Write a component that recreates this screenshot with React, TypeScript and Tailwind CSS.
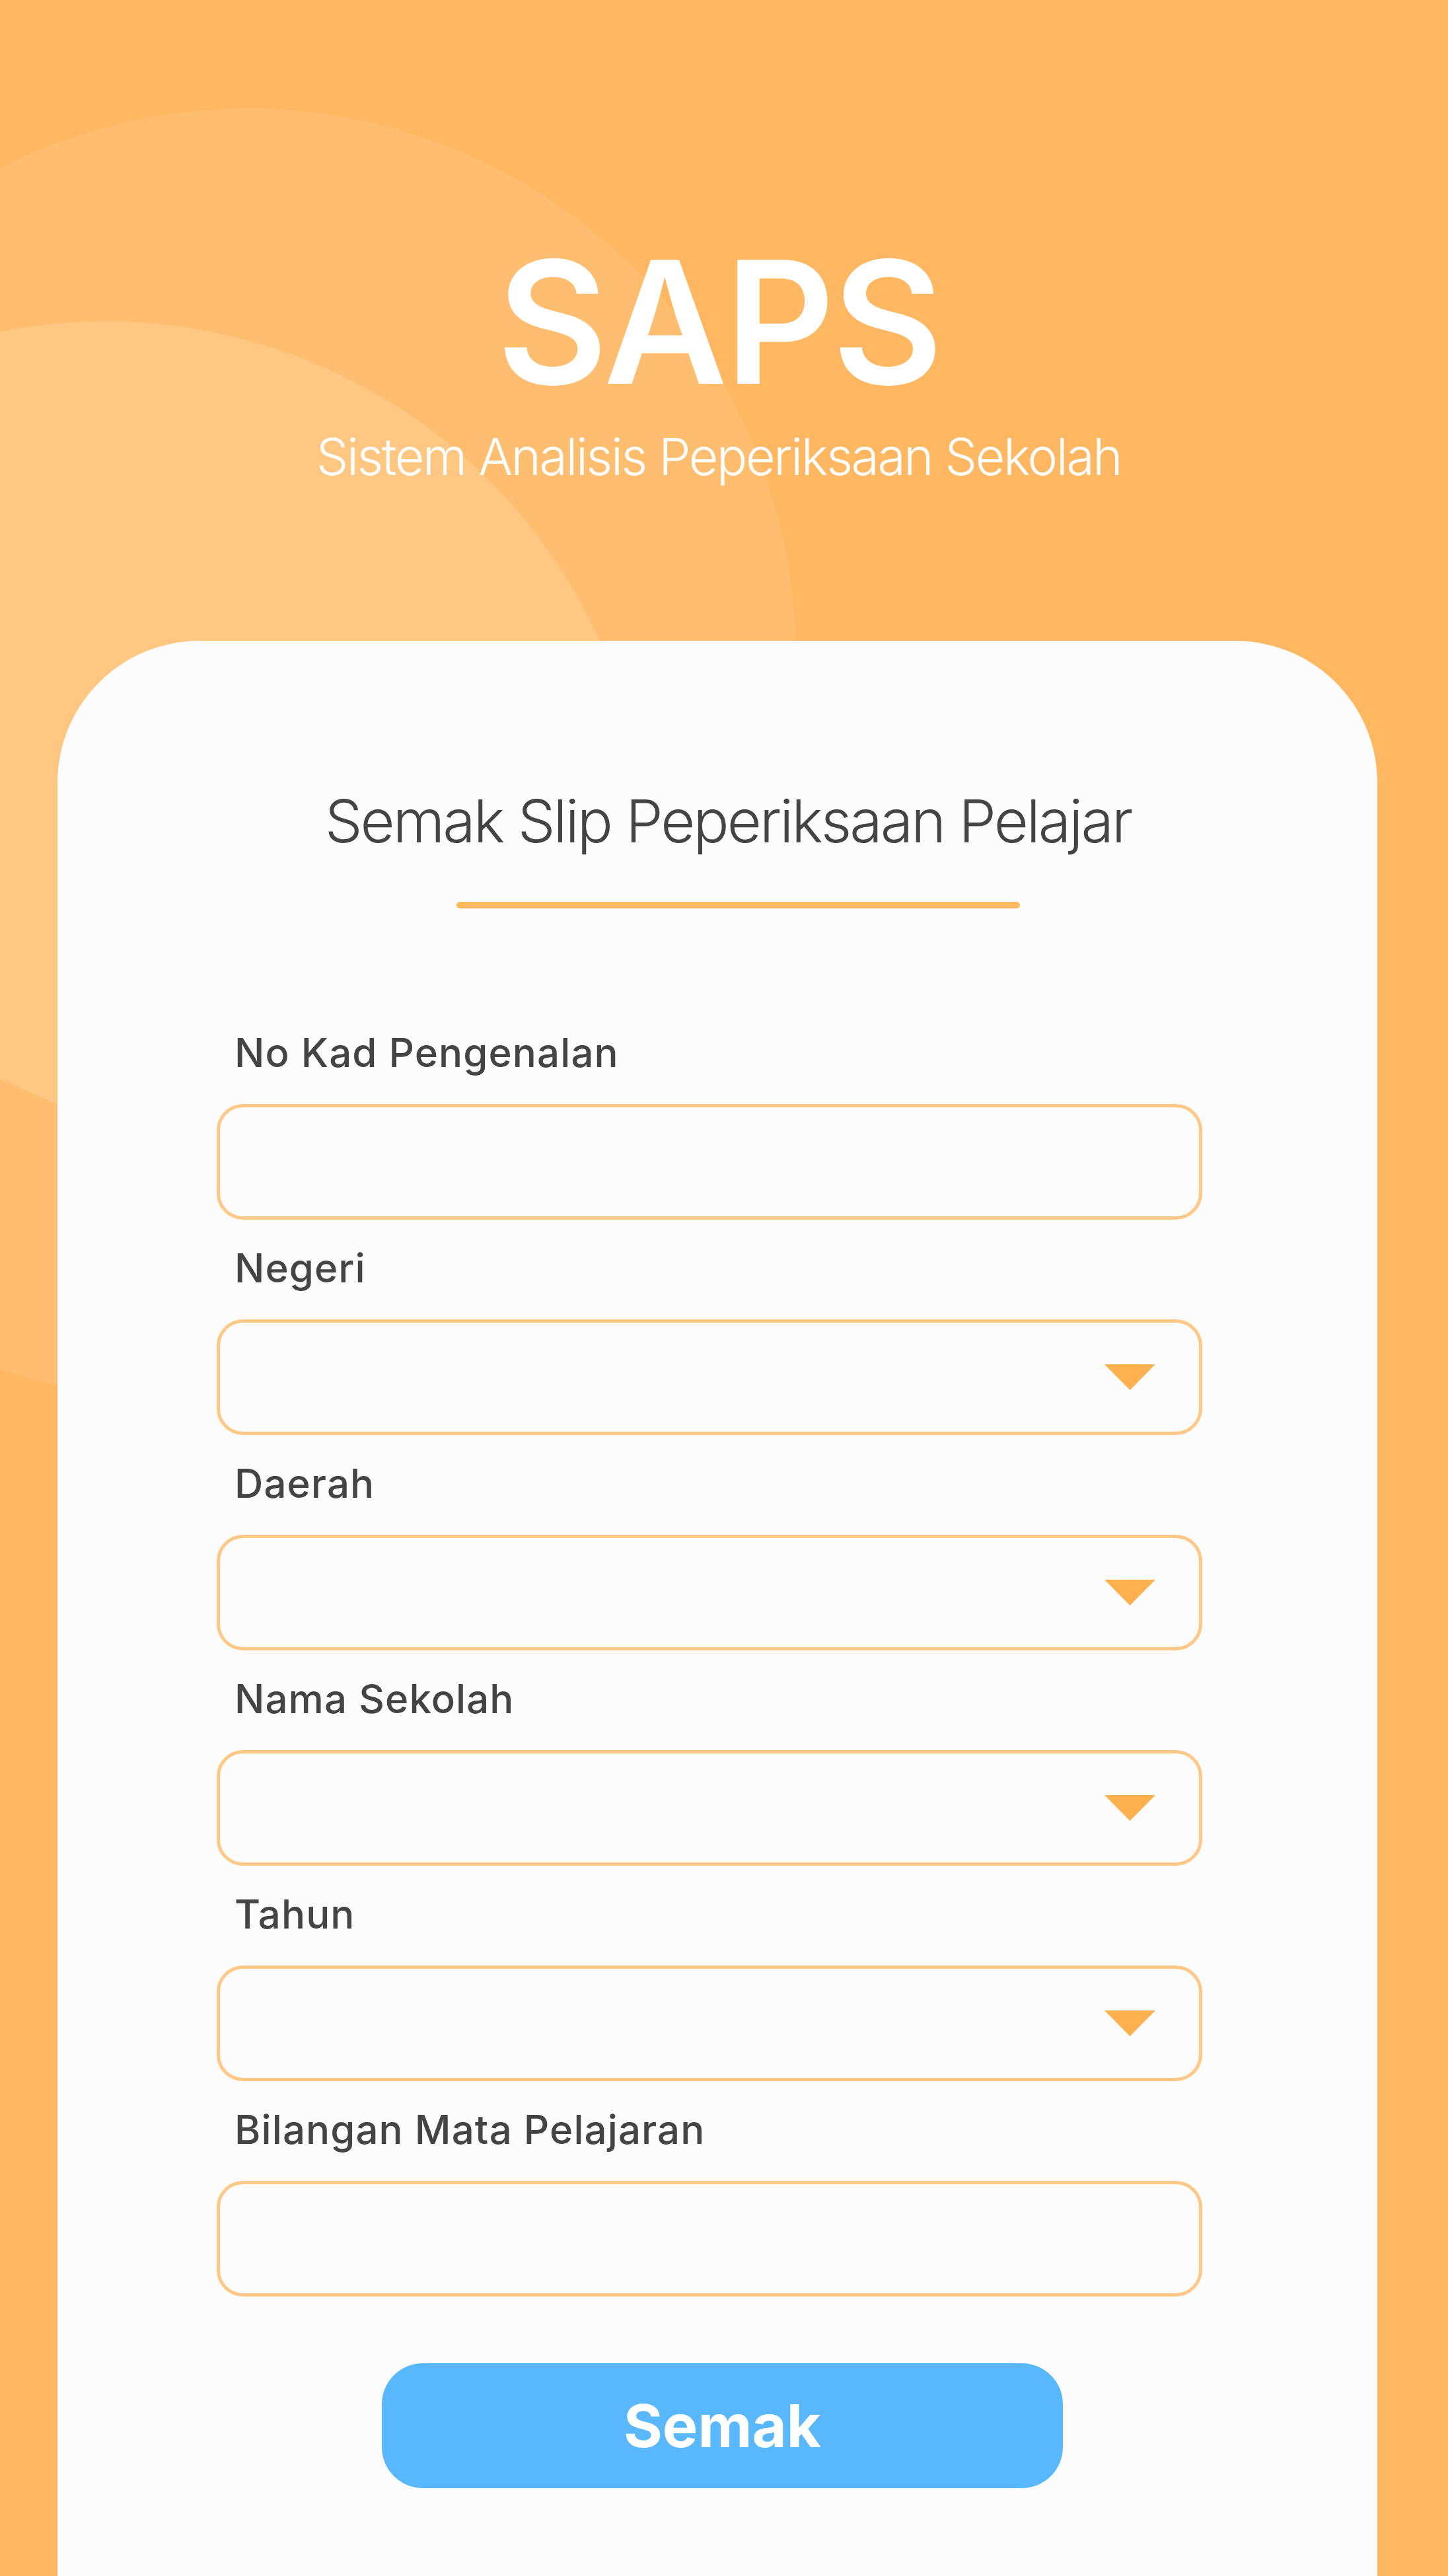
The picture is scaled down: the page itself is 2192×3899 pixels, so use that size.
import React from "react";

const fields = [
  { label: "No Kad Pengenalan", select: false },
  { label: "Negeri", select: true },
  { label: "Daerah", select: true },
  { label: "Nama Sekolah", select: true },
  { label: "Tahun", select: true },
  { label: "Bilangan Mata Pelajaran", select: false },
];

function Backdrop() {
  return (
    <svg className="absolute inset-0" width="2192" height="3899" viewBox="0 0 2192 3899">
      <path d="M0 254 A830 830 0 0 1 1205 1000 L1205 1400 L87 2098 L0 2073 Z" fill="#FFBE6F" />
      <path d="M0 502 A821 821 0 0 1 921 1000 L921 1300 L87 1672 L0 1633 Z" fill="#FFC782" />
    </svg>
  );
}

function Caret() {
  return (
    <svg width="77" height="39" viewBox="0 0 77 39">
      <polygon points="0,0 77,0 38.5,39" fill="#FFB04F" />
    </svg>
  );
}

function Field({ label, select }: { label: string; select: boolean }) {
  return (
    <div className="flex flex-col">
      <label className="h-[72px] pl-[27px] text-[60px] leading-[72px] font-medium tracking-[0.018em] text-[#444444]">
        {label}
      </label>
      {select ? (
        <div className="mt-[42px] flex h-[175px] w-[1492px] items-center justify-end rounded-[40px] border-[5px] border-[#FFC887] pr-[66px]">
          <Caret />
        </div>
      ) : (
        <input
          type="text"
          className="mt-[42px] h-[175px] w-[1492px] rounded-[40px] border-[5px] border-[#FFC887] bg-transparent px-[40px] text-[60px] text-[#444444] outline-none"
        />
      )}
    </div>
  );
}

export default function App() {
  return (
    <div className="relative flex h-[3899px] w-[2192px] flex-col overflow-hidden bg-[#FFB861] font-['Inter',sans-serif]">
      <Backdrop />

      <header className="relative flex flex-col items-center pt-[358px] pr-[16px]">
        <h1 className="text-[258px] leading-none font-semibold tracking-[-0.015em] text-white">SAPS</h1>
        <p className="mt-[37px] text-[77px] leading-none font-light tracking-[-0.031em] text-white">
          Sistem Analisis Peperiksaan Sekolah
        </p>
      </header>

      <main className="relative mt-[240px] ml-[87px] flex w-[1998px] flex-1 flex-col rounded-t-[215px] bg-[#FCFCFC] pt-[228px]">
        <h2 className="pl-[32px] text-center text-[90px] leading-none font-light tracking-[-0.033em] text-[#444444]">
          Semak Slip Peperiksaan Pelajar
        </h2>
        <div className="mt-[77px] ml-[604px] h-[10px] w-[853px] rounded-full bg-[#FFB95F]" />

        <form className="mt-[182px] ml-[241px] flex flex-col gap-[37px]">
          {fields.map((f) => (
            <Field key={f.label} label={f.label} select={f.select} />
          ))}
          <button
            type="button"
            className="mt-[64px] ml-[250px] flex h-[189px] w-[1031px] items-center justify-center rounded-[62px] bg-[#59B8FD] text-[90px] font-bold text-white"
          >
            Semak
          </button>
        </form>
      </main>
    </div>
  );
}
